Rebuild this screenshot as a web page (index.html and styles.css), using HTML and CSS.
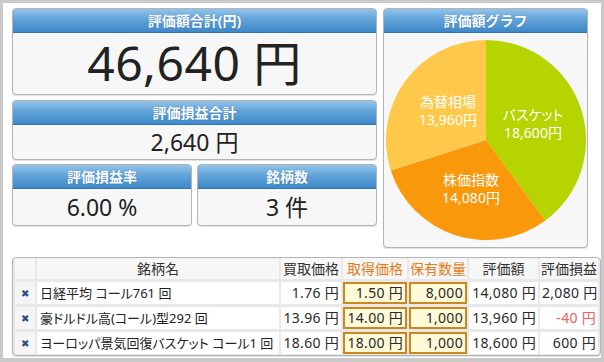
FILE: index.html
```html
<!DOCTYPE html>
<html lang="ja">
<head>
<meta charset="utf-8">
<link rel="stylesheet" href="styles.css">
</head>
<body>
<div class="frame">
  <div class="top">
    <div class="left">
      <div class="panel p-total">
        <div class="head">評価額合計(円)</div>
        <div class="body big">46,640 円</div>
      </div>
      <div class="panel p-profit">
        <div class="head">評価損益合計</div>
        <div class="body mid">2,640 円</div>
      </div>
      <div class="pair">
        <div class="panel p-small">
          <div class="head">評価損益率</div>
          <div class="body mid">6.00 %</div>
        </div>
        <div class="panel p-small">
          <div class="head">銘柄数</div>
          <div class="body mid">3 件</div>
        </div>
      </div>
    </div>
    <div class="panel p-graph">
      <div class="head">評価額グラフ</div>
      <div class="body chart">
        <svg width="203" height="213" viewBox="0 0 203 213">
          <path d="M102 107 L102 7 A100 100 0 0 1 161.37 187.47 Z" fill="#b5d400"/>
          <path d="M102 107 L161.37 187.47 A100 100 0 0 1 6.76 137.49 Z" fill="#f8980a"/>
          <path d="M102 107 L6.76 137.49 A100 100 0 0 1 102 7 Z" fill="#fec94b"/>
          <g class="lbl">
            <text x="64" y="68">為替相場</text>
            <text x="64" y="86">13,960円</text>
            <text x="149" y="81">バスケット</text>
            <text x="149" y="99">18,600円</text>
            <text x="87" y="146">株価指数</text>
            <text x="87" y="164">14,080円</text>
          </g>
        </svg>
      </div>
    </div>
  </div>
  <table class="stocks">
    <colgroup>
      <col class="c-x"><col class="c-name"><col class="c-buy"><col class="c-acq"><col class="c-qty"><col class="c-val"><col class="c-pl">
    </colgroup>
    <thead>
      <tr>
        <th></th><th>銘柄名</th><th>買取価格</th><th class="hl">取得価格</th><th class="hl">保有数量</th><th>評価額</th><th>評価損益</th>
      </tr>
    </thead>
    <tbody>
      <tr>
        <td class="x">✖</td><td class="name">日経平均 コール761 回</td><td class="num">1.76 円</td>
        <td class="inp"><span class="box">1.50 円</span></td><td class="inp"><span class="box">8,000</span></td>
        <td class="num">14,080 円</td><td class="num">2,080 円</td>
      </tr>
      <tr>
        <td class="x">✖</td><td class="name">豪ドルドル高(コール)型292 回</td><td class="num">13.96 円</td>
        <td class="inp"><span class="box">14.00 円</span></td><td class="inp"><span class="box">1,000</span></td>
        <td class="num">13,960 円</td><td class="num neg">-40 円</td>
      </tr>
      <tr>
        <td class="x">✖</td><td class="name">ヨーロッパ景気回復バスケット コール1 回</td><td class="num">18.60 円</td>
        <td class="inp"><span class="box">18.00 円</span></td><td class="inp"><span class="box">1,000</span></td>
        <td class="num">18,600 円</td><td class="num">600 円</td>
      </tr>
    </tbody>
  </table>
</div>
</body>
</html>
```
FILE: styles.css
```css
* { box-sizing: border-box; }
html, body { margin: 0; padding: 0; }
body {
  font-family: "Noto Sans", "Noto Sans CJK JP", sans-serif;
  color: #222;
  background: #fff;
}
.frame {
  width: 604px;
  height: 362px;
  border: 3px solid #c9c9c9;
  border-bottom-width: 4px;
  padding: 5px 0 0 9px;
  background: #fff;
  overflow: hidden;
}
.top {
  display: flex;
  gap: 6px;
}
.left {
  width: 365px;
  display: flex;
  flex-direction: column;
  gap: 5px;
}
.pair {
  display: flex;
  gap: 5px;
  margin-top: -1px;
}
.panel {
  border: 1px solid #b4b4b4;
  border-radius: 4px;
  background: #f7f7f7;
  overflow: hidden;
  box-shadow: 0 1px 1px rgba(0,0,0,0.12);
}
.head {
  height: 25px;
  line-height: 23px;
  background: linear-gradient(#92c4ea, #62a3da 45%, #3d88c8);
  border: 1px solid #3273ad;
  border-radius: 3px 3px 0 0;
  color: #fff;
  font-weight: bold;
  font-size: 14px;
  text-align: center;
  text-shadow: 0 0 1px #2d6aa3;
  margin: -1px -1px 0 -1px;
}
.body {
  text-align: center;
}
.p-total { height: 87px; }
.p-total .body { height: 61px; }
.big {
  font-size: 48px;
  line-height: 60px;
  letter-spacing: 0.5px;
}
.p-profit { height: 60px; }
.mid {
  font-size: 23px;
  line-height: 34px;
}
.p-small { width: 180px; height: 62px; }
.p-small .mid { line-height: 36px; }
.p-graph {
  width: 205px;
  height: 240px;
}
.chart {
  height: 214px;
  text-align: left;
}
.chart svg { display: block; }
.lbl text {
  fill: #fff;
  font-size: 14px;
  font-family: "Noto Sans", "Noto Sans CJK JP", sans-serif;
  font-feature-settings: "palt";
  text-anchor: middle;
  dominant-baseline: central;
}
.stocks {
  margin-top: 9px;
  width: 579px;
  border: 1px solid #b4b4b4;
  border-radius: 4px;
  background: #e8e8e8;
  border-collapse: separate;
  border-spacing: 2px 0;
  table-layout: fixed;
  font-size: 14px;
  box-shadow: 0 1px 1px rgba(0,0,0,0.12);
}
.c-x { width: 20px; }
.c-name { width: 242px; }
.c-buy { width: 60px; }
.c-acq { width: 64px; }
.c-qty { width: 58px; }
.c-val { width: 69px; }
.c-pl { width: 58px; }
.stocks th,
.stocks td {
  box-sizing: content-box;
  white-space: nowrap;
  overflow: hidden;
  line-height: 20px;
  border-bottom: 3px solid #e8e8e8;
}
.stocks th {
  height: 21px;
  font-weight: normal;
  background: #f7f7f7;
  color: #333;
  padding: 0;
}
.stocks th.hl { color: #e57d1c; }
.stocks td {
  height: 22px;
  padding: 0 2px;
  background: #fff;
}
.stocks tr:last-child td { border-bottom: 1px solid #e8e8e8; }
.stocks td.x {
  background: #f5f5f5;
  color: #2c4f86;
  font-size: 10px;
  text-align: center;
  padding: 0;
}
.stocks td.name {
  padding-left: 3px;
  color: #222;
  font-size: 13px;
  font-feature-settings: "palt";
}
.stocks td.num { text-align: right; color: #2a2a2a; letter-spacing: 0.3px; }
.stocks td.neg { color: #f0605a; }
.stocks td.inp { padding: 0; background: #fff; }
.box {
  display: block;
  height: 22px;
  line-height: 18px;
  border: 2px solid #c9891e;
  background: #fffbd9;
  text-align: right;
  padding-right: 2px;
  color: #2a2a2a;
  letter-spacing: 0.3px;
}
```
